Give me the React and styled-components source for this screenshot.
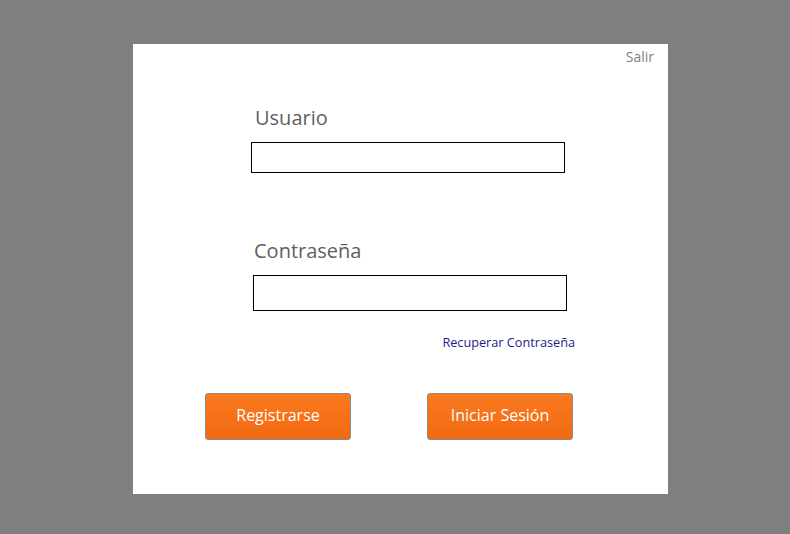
import React from "react";
import styled, { createGlobalStyle } from "styled-components";

const GlobalStyle = createGlobalStyle`
  html, body {
    margin: 0;
    padding: 0;
    background: #7f7f7f;
    font-family: "Open Sans", "Noto Sans", sans-serif;
  }
`;

export default function App() {
  return (
    <>
      <GlobalStyle />
      <Page>
        <Card>
          <TopBar>
            <ExitLink>Salir</ExitLink>
          </TopBar>
          <Field offset={118} labelOffset={4} gapTop={36}>
            <Label>Usuario</Label>
            <Input type="text" tall={31} />
          </Field>
          <Field offset={120} labelOffset={1} gapTop={65}>
            <Label>Contraseña</Label>
            <Input type="password" tall={36} />
          </Field>
          <RecoverRow>
            <RecoverLink>Recuperar Contraseña</RecoverLink>
          </RecoverRow>
          <Actions>
            <ActionButton>Registrarse</ActionButton>
            <ActionButton>Iniciar Sesión</ActionButton>
          </Actions>
        </Card>
      </Page>
    </>
  );
}

const Page = styled.div`
  width: 790px;
  height: 534px;
  padding: 44px 0 0 133px;
  box-sizing: border-box;
`;

const Card = styled.div`
  width: 535px;
  height: 450px;
  background: #ffffff;
  display: flex;
  flex-direction: column;
`;

const TopBar = styled.div`
  display: flex;
  justify-content: flex-end;
  padding: 3px 14px 0 0;
  height: 22px;
`;

const ExitLink = styled.span`
  font-size: 14px;
  color: #7f7f7f;
  cursor: pointer;
`;

const Field = styled.div`
  display: flex;
  flex-direction: column;
  margin-left: ${({ offset }) => offset}px;
  margin-top: ${({ gapTop }) => gapTop}px;

  & > span {
    margin-left: ${({ labelOffset }) => labelOffset}px;
  }
`;

const Label = styled.span`
  font-size: 20px;
  line-height: 26px;
  color: #5f5f5f;
  margin-bottom: 11px;
`;

const Input = styled.input`
  width: 314px;
  height: ${({ tall }) => tall}px;
  box-sizing: border-box;
  border: 1px solid #000000;
  border-radius: 0;
  outline: none;
  padding: 0 6px;
  font-family: inherit;
  font-size: 14px;
  background: #ffffff;
`;

const RecoverRow = styled.div`
  display: flex;
  justify-content: flex-end;
  padding-right: 93px;
  margin-top: 22px;
`;

const RecoverLink = styled.a`
  font-size: 12.7px;
  color: #1c1c8c;
  cursor: pointer;
`;

const Actions = styled.div`
  display: flex;
  gap: 76px;
  margin: 42px 0 0 72px;
`;

const ActionButton = styled.button`
  width: 146px;
  height: 47px;
  box-sizing: border-box;
  border: 1px solid #8a8a8a;
  border-radius: 3px;
  padding: 0 0 4px;
  background: linear-gradient(#fa7a1f, #f26a12);
  color: #ffffff;
  font-family: inherit;
  font-size: 16px;
  cursor: pointer;
`;
